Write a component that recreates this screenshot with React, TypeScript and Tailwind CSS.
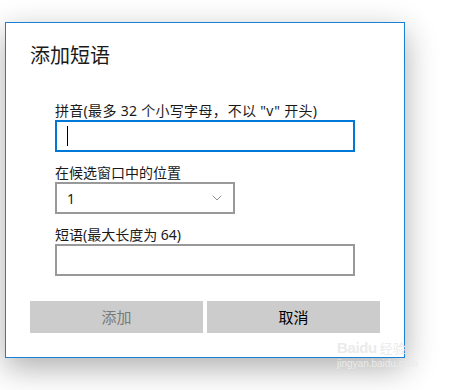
import { ChevronDown } from "lucide-react";

const font = { fontFamily: '"Noto Sans", "Noto Sans CJK SC", sans-serif' };

function Field({
  label,
  children,
  wide,
}: {
  label: React.ReactNode;
  children: React.ReactNode;
  wide?: boolean;
}) {
  return (
    <div className="flex flex-col">
      <label
        className={
          wide
            ? "whitespace-nowrap text-[14px] leading-[18px] tracking-[0.3px] text-[#1a1a1a]"
            : "whitespace-nowrap text-[14px] leading-[18px] text-[#1a1a1a]"
        }
      >
        {label}
      </label>
      {children}
    </div>
  );
}

export default function App() {
  return (
    <div className="relative h-[390px] w-[454px] overflow-hidden bg-white" style={font}>
      <div className="ml-[5px] mt-[22px] w-[400px] border border-[#1a7fd6] bg-white px-[24px] pb-[24px] pt-[19px] shadow-[0_10px_30px_rgba(0,0,0,0.32)]">
        <h1 className="text-[20px] leading-[28px] font-normal text-[#1a1a1a]">添加短语</h1>

        <div className="mt-[32px] flex flex-col gap-[12px] pl-[25px]">
          <Field
            wide
            label={
              <>
                拼音(最多 32 个小写字母<span className="inline-block w-[15px]">，</span>不以 "v" 开头)
              </>
            }
          >
            <div className="flex h-[32px] w-[300px] items-center border-2 border-[#0078d7] px-[10px]">
              <span className="h-[20px] w-px bg-black" />
            </div>
          </Field>

          <Field label="在候选窗口中的位置">
            <div className="flex h-[32px] w-[180px] items-center justify-between border-2 border-[#999999] pl-[10px] pr-[8px] text-[14px] text-[#1a1a1a]">
              <span>1</span>
              <ChevronDown className="h-[16px] w-[16px] text-[#777777]" strokeWidth={1.2} />
            </div>
          </Field>

          <Field label="短语(最大长度为 64)">
            <div className="h-[32px] w-[300px] border-2 border-[#999999]" />
          </Field>
        </div>

        <div className="mt-[25px] grid grid-cols-2 gap-[4px]">
          <button className="h-[32px] bg-[#cccccc] text-[15px] text-[#7a7a7a]">添加</button>
          <button className="h-[32px] bg-[#cccccc] text-[15px] text-black">取消</button>
        </div>
      </div>

      <div className="pointer-events-none absolute left-[337px] top-[340px] flex flex-col items-start leading-none text-[#ebebeb]">
        <div className="flex items-end gap-[3px]">
          <span className="text-[15px] font-bold tracking-tight" style={{ fontFamily: '"Liberation Sans", sans-serif' }}>
            Baidu
          </span>
          <span className="text-[13px]">经验</span>
        </div>
        <span className="mt-[4px] text-[10px]" style={{ fontFamily: '"Liberation Sans", sans-serif' }}>
          jingyan.baidu.com
        </span>
      </div>
    </div>
  );
}
